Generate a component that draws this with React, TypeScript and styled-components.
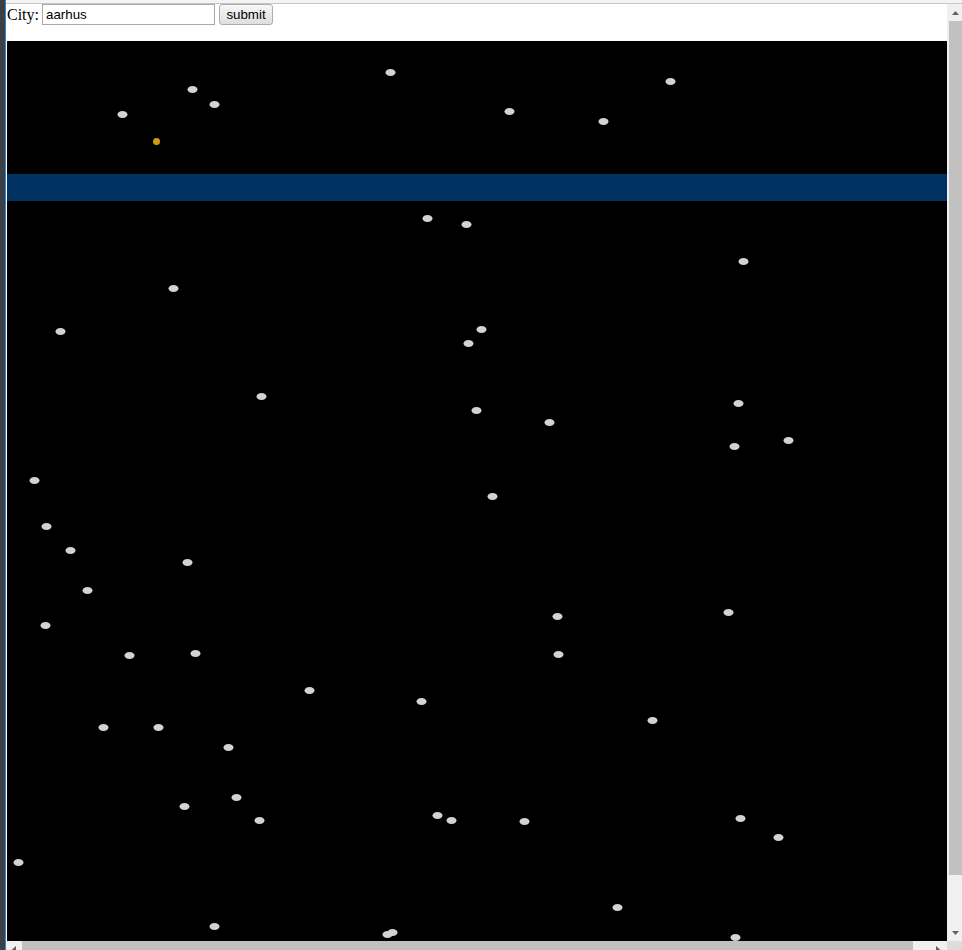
import React from 'react';
import styled, {createGlobalStyle} from 'styled-components';

// star centres in screen coordinates (the sky starts at 7,41)
const stars: [number, number][] = [
    [390, 72], [670, 81], [192, 89], [214, 104], [122, 114], [509, 111], [603, 121],
    [427, 218], [466, 224], [743, 261], [173, 288], [60, 331], [481, 329], [468, 343],
    [261, 396], [738, 403], [476, 410], [549, 422], [788, 440], [734, 446], [34, 480],
    [492, 496], [46, 526], [70, 550], [187, 562], [87, 590], [728, 612], [557, 616],
    [45, 625], [195, 653], [129, 655], [558, 654], [309, 690], [421, 701], [652, 720],
    [103, 727], [158, 727], [228, 747], [236, 797], [184, 806], [259, 820], [437, 815],
    [451, 820], [524, 821], [740, 818], [778, 837], [18, 862], [617, 907], [214, 926],
    [392, 932], [387, 934], [735, 937],
];
const SKY_X = 6.5;
const SKY_Y = 40.5;

const GlobalStyle = createGlobalStyle`
    html, body {
        margin: 0;
        padding: 0;
        overflow: hidden;
        background: #fff;
    }
`;

const App = () => {
    return (
        <>
            <GlobalStyle/>
            <Window>
                <SideStrip/>
                <AccentLine/>
                <TopBar/>
                <Viewport>
                    <Form onSubmit={e => e.preventDefault()}>
                        <Label>City:</Label>
                        <CityInput defaultValue="aarhus"/>
                        <SubmitButton type="submit">submit</SubmitButton>
                    </Form>
                    <Sky>
                        <Band/>
                        <StarField width="977" height="990">
                            {stars.map(([x, y], i) => (
                                <ellipse key={i} cx={x - SKY_X} cy={y - SKY_Y} rx="5" ry="3.5" fill="#d3d3d3"/>
                            ))}
                            <circle cx={156 - SKY_X} cy={141 - SKY_Y} r="3.5" fill="#d39a10"/>
                        </StarField>
                    </Sky>
                </Viewport>
                <VScroll>
                    <ArrowBox>
                        <svg width="7" height="4" viewBox="0 0 7 4"><polygon points="3.5,0 7,4 0,4" fill="#606060"/></svg>
                    </ArrowBox>
                    <VTrack>
                        <VThumb/>
                    </VTrack>
                    <ArrowBox>
                        <svg width="7" height="4" viewBox="0 0 7 4"><polygon points="0,0 7,0 3.5,4" fill="#606060"/></svg>
                    </ArrowBox>
                </VScroll>
                <HScroll>
                    <HArrowBox>
                        <svg width="5" height="9" viewBox="0 0 5 9"><polygon points="5,0 5,9 0,4.5" fill="#606060"/></svg>
                    </HArrowBox>
                    <HThumb/>
                    <HArrowBox right>
                        <svg width="5" height="9" viewBox="0 0 5 9"><polygon points="0,0 0,9 5,4.5" fill="#606060"/></svg>
                    </HArrowBox>
                </HScroll>
                <Corner/>
            </Window>
        </>
    );
};

const Window = styled.div`
    width: 962px;
    height: 950px;
    overflow: hidden;
    display: grid;
    grid-template-columns: 5px 1px 941px 15px;
    grid-template-rows: 4px 937px 9px;
`;

const SideStrip = styled.div`
    grid-column: 1;
    grid-row: 1 / 4;
    background: #3c4043;
`;

const AccentLine = styled.div`
    grid-column: 2;
    grid-row: 1 / 4;
    background: #2b88d8;
`;

const TopBar = styled.div`
    grid-column: 3 / 5;
    grid-row: 1;
    background: #f4f4f4;
    border-bottom: 1px solid #c6c6c6;
    box-sizing: border-box;
`;

const Viewport = styled.div`
    grid-column: 3;
    grid-row: 2;
    overflow: hidden;
    padding-left: 1px;
    background: #fff;
`;

const Form = styled.form`
    display: flex;
    align-items: center;
    gap: 4px;
    height: 21px;
    margin: 0 0 16px;
`;

const Label = styled.span`
    margin-right: -1px;
    font-family: "Liberation Serif", "Times New Roman", serif;
    font-size: 16px;
    color: #000;
`;

const CityInput = styled.input`
    box-sizing: border-box;
    width: 173px;
    height: 21px;
    padding: 1px 3px;
    border: 1px solid #a9a9a9;
    font-family: "Liberation Sans", Arial, sans-serif;
    font-size: 13.33px;
    color: #000;
    outline: none;
`;

const SubmitButton = styled.button`
    box-sizing: border-box;
    width: 54px;
    height: 21px;
    padding: 0 6px;
    border: 1px solid #adadad;
    border-radius: 3px;
    background: linear-gradient(#f7f7f7, #dedede);
    font-family: "Liberation Sans", Arial, sans-serif;
    font-size: 13.33px;
    color: #000;
`;

const Sky = styled.div`
    position: relative;
    width: 977px;
    height: 990px;
    background: #000;
    padding-top: 133px;
    box-sizing: border-box;
`;

const Band = styled.div`
    height: 27px;
    background: #003362;
`;

const StarField = styled.svg`
    position: absolute;
    left: 0;
    top: 0;
`;

const VScroll = styled.div`
    grid-column: 4;
    grid-row: 2;
    display: flex;
    flex-direction: column;
    background: #f0f0f0;
`;

const ArrowBox = styled.div`
    height: 17px;
    display: flex;
    align-items: center;
    justify-content: center;
    padding-left: 2px;
`;

const VTrack = styled.div`
    flex: 1;
    display: flex;
    flex-direction: column;
    padding-left: 2px;
`;

const VThumb = styled.div`
    height: 854px;
    background: #c1c1c1;
`;

const HScroll = styled.div`
    grid-column: 3;
    grid-row: 3;
    display: flex;
    align-items: flex-start;
    background: #f0f0f0;
`;

const HArrowBox = styled.div<{right?: boolean}>`
    box-sizing: border-box;
    width: ${props => props.right ? '34px' : '16px'};
    height: 15px;
    display: flex;
    align-items: center;
    justify-content: ${props => props.right ? 'flex-start' : 'flex-end'};
    padding: ${props => props.right ? '3px 0 0 23px' : '3px 6px 0 0'};
`;

const HThumb = styled.div`
    flex: 1;
    height: 15px;
    background: #c1c1c1;
`;

const Corner = styled.div`
    grid-column: 4;
    grid-row: 3;
    background: #dcdcdc;
`;

export default App;
